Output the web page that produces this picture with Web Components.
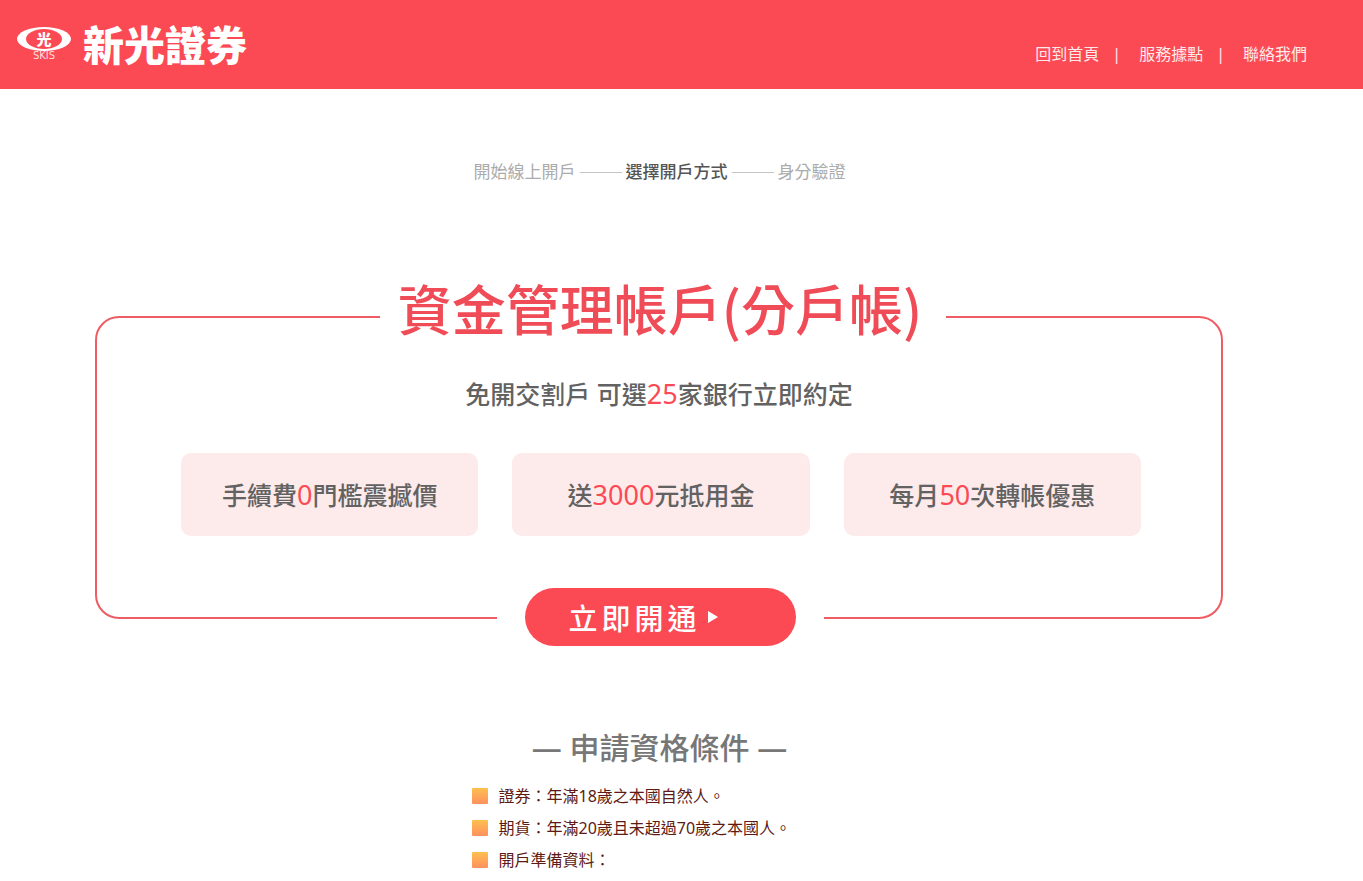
<!DOCTYPE html>
<html lang="zh-Hant-TW">
<head>
<meta charset="utf-8">
<meta name="viewport" content="width=device-width, initial-scale=1">
<title>新光證券 線上開戶</title>
<style>
  html { overflow-x: hidden; }
  body {
    margin: 0;
    background: #fff;
    color: #626262;
    font-family: "Noto Sans", "Noto Sans CJK TC", sans-serif;
    --brand: #fc4a54;
    --brand-line: #ee5c64;
    --tint: #fdeaea;
  }
</style>
</head>
<body>
<account-page></account-page>

<script>
const define = (name, html) => customElements.define(name, class extends HTMLElement {
  constructor() {
    super();
    this.attachShadow({ mode: 'open' }).innerHTML = html;
  }
});

define('skis-logo', `
  <style>
    :host { display: block; }
    a { display: flex; align-items: center; gap: 11px; color: #fff; text-decoration: none; }
    svg { display: block; width: 56px; height: 34px; }
    .name { font-size: 41px; line-height: 48px; font-weight: 900; font-family: "Noto Sans CJK TC", sans-serif; }
    .label { font-family: "DejaVu Sans", "Liberation Sans", sans-serif; font-size: 10px; fill: #ffdcdf; }
    .mark { font-family: "Noto Sans CJK TC", sans-serif; font-size: 15px; font-weight: 900; fill: #fff; }
  </style>
  <a href="#">
    <svg viewBox="0 0 56 34" role="img" aria-label="SKIS">
      <ellipse cx="28" cy="13" rx="27" ry="12" fill="#fff"/>
      <ellipse cx="28" cy="13" rx="18" ry="10" fill="#fc4a54"/>
      <text class="mark" x="28" y="19" text-anchor="middle">光</text>
      <text class="label" x="28" y="33" text-anchor="middle">SKIS</text>
    </svg>
    <span class="name">新光證券</span>
  </a>`);

define('site-nav', `
  <style>
    :host { display: block; }
    nav { display: flex; align-items: center; font-size: 16px; line-height: 24px; color: #ffe9ea; }
    ::slotted(a) { color: inherit; text-decoration: none; }
    ::slotted(span) { margin: 0 18px 0 13px; }
  </style>
  <nav><slot></slot></nav>`);

define('site-header', `
  <style>
    :host { display: flex; justify-content: space-between; align-items: center; box-sizing: border-box;
      height: 89px; padding: 0 56px 2px 16px; background: var(--brand); }
    ::slotted(skis-logo) { padding-bottom: 2px; }
    ::slotted(site-nav) { padding-top: 20px; }
  </style>
  <slot></slot>`);

define('step-trail', `
  <style>
    :host { display: block; }
    ol { display: flex; justify-content: center; align-items: center; gap: 4px; margin: 0; padding: 0;
      list-style: none; font-size: 17px; line-height: 24px; color: #ababab; }
    li { display: flex; align-items: center; gap: 4px; white-space: nowrap; }
    li + li::before { content: ""; width: 42px; height: 1px; background: #c4c4c4; }
    .now { color: #555; font-weight: 500; }
  </style>
  <ol><li>開始線上開戶</li><li class="now" aria-current="step">選擇開戶方式</li><li>身分驗證</li></ol>`);

define('perk-tile', `
  <style>
    :host { display: flex; flex: 1; justify-content: center; align-items: center; height: 83px;
      border-radius: 10px; background: var(--tint); font-size: 25px; line-height: 36px; font-weight: 500; white-space: nowrap; }
    ::slotted(b) { color: var(--brand); font-size: 27px; }
  </style>
  <span><slot></slot></span>`);

define('open-button', `
  <style>
    :host { display: block; }
    button { display: flex; align-items: center; gap: 7px; box-sizing: border-box; width: 271px; height: 58px;
      padding: 0 44px; border: 0; border-radius: 29px; background: var(--brand); color: #fff; cursor: pointer;
      font: 500 29px/40px "Noto Sans CJK TC", sans-serif; letter-spacing: 4px; }
    svg { width: 10px; height: 14px; }
  </style>
  <button type="button"><slot></slot><svg viewBox="0 0 10 14" aria-hidden="true"><path d="M0 1L10 7L0 13Z" fill="#fff"/></svg></button>`);

define('offer-card', `
  <style>
    :host { display: flex; flex-direction: column; align-items: center; border: 2px solid var(--brand-line); border-radius: 24px; }
    h1 { margin: -46px 0 0 8px; padding: 0 24px 0 18px; background: #fff; color: #f04c57; font-size: 54px; line-height: 72px;
      font-weight: 500; white-space: nowrap; font-family: "Noto Sans CJK TC", sans-serif; }
    p { margin: 32px 0 0; font-size: 25px; line-height: 36px; font-weight: 500; }
    b { color: var(--brand); font-size: 27px; font-weight: 400; }
    .perks { display: flex; align-self: stretch; gap: 34px; margin: 41px 80px 0 84px; }
    .action { margin: 52px 0 -29px 2px; padding: 0 28px; background: #fff; }
  </style>
  <h1><slot name="title"></slot></h1>
  <p>免開交割戶 可選<b>25</b>家銀行立即約定</p>
  <div class="perks"><slot></slot></div>
  <div class="action"><slot name="action"></slot></div>`);

define('terms-list', `
  <style>
    :host { display: block; }
    h2 { margin: 0; text-align: center; color: #777; font-size: 30px; line-height: 44px; font-weight: 500; }
    ul { width: 376px; margin: 10px auto 0; padding: 0; list-style: none; color: #5e1a14; font-size: 16px; line-height: 32px; }
    li { display: flex; align-items: center; gap: 11px; white-space: nowrap; }
    li::before { content: ""; width: 16px; height: 16px; border-radius: 1px; background: linear-gradient(#fdc04e, #fd9160); }
  </style>
  <h2>— 申請資格條件 —</h2>
  <ul>
    <li>證券：年滿18歲之本國自然人。</li>
    <li>期貨：年滿20歲且未超過70歲之本國人。</li>
    <li>開戶準備資料：</li>
  </ul>`);

define('account-page', `
  <style>
    :host { display: block; }
    main { padding: 71px 44px 0 0; }
    offer-card { margin: 132px 96px 0 95px; }
    terms-list { margin-top: 107px; }
    b { font-weight: 400; }
  </style>
  <site-header>
    <skis-logo></skis-logo>
    <site-nav><a href="#">回到首頁</a><span>|</span><a href="#">服務據點</a><span>|</span><a href="#">聯絡我們</a></site-nav>
  </site-header>
  <main>
    <step-trail></step-trail>
    <offer-card>
      <span slot="title">資金管理帳戶(分戶帳)</span>
      <perk-tile>手續費<b>0</b>門檻震撼價</perk-tile>
      <perk-tile>送<b>3000</b>元抵用金</perk-tile>
      <perk-tile>每月<b>50</b>次轉帳優惠</perk-tile>
      <open-button slot="action">立即開通</open-button>
    </offer-card>
    <terms-list></terms-list>
  </main>`);
</script>
</body>
</html>
